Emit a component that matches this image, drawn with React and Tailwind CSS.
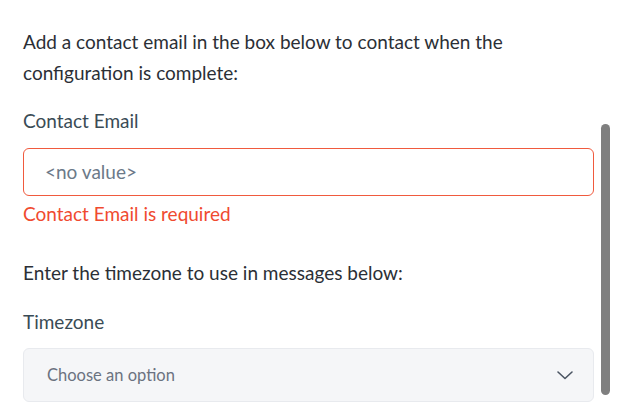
export default function App() {
    return (
        <div className="w-[619px] h-[407px] overflow-hidden bg-white flex" style={{ fontFamily: 'Lato, "Noto Sans", sans-serif' }}>
            {/* Form column */}
            <div className="flex-1 pl-[23px] pr-[4px] pt-[26px]">
                <p className="max-w-[500px] text-[19px] leading-[31px] text-[#2b2f36]">
                    Add a contact email in the box below to contact when the configuration is complete:
                </p>

                <label className="block mt-[21px] text-[19px] leading-[24px] text-[#3a4b55]">Contact Email</label>
                <div className="mt-[15px] h-[48px] border border-[#f05a3e] rounded-[6px] flex items-center px-[21px]">
                    <span className="text-[19px] text-[#6c7a89]">&lt;no value&gt;</span>
                </div>
                <div className="mt-[6px] text-[19px] leading-[24px] text-[#f04a2f]">Contact Email is required</div>

                <p className="mt-[35px] text-[19px] leading-[24px] text-[#2b2f36]">
                    Enter the timezone to use in messages below:
                </p>

                <label className="block mt-[25px] text-[19px] leading-[24px] text-[#3a4b55]">Timezone</label>
                <div className="mt-[14px] h-[54px] bg-[#f5f6f8] border border-[#e8eaee] rounded-[6px] flex items-center justify-between pl-[23px] pr-[16px]">
                    <span className="text-[16.5px] text-[#6b7280]">Choose an option</span>
                    <svg width="24" height="24" viewBox="0 0 24 24" fill="none" stroke="#4b5563" strokeWidth="1.6" strokeLinecap="round" strokeLinejoin="round">
                        <polyline points="5 9 12 15.5 19 9" />
                    </svg>
                </div>
            </div>

            {/* Scrollbar */}
            <div className="w-[21px] pt-[124px] pl-[3px]">
                <div className="w-[9px] h-[271px] rounded-full bg-[#7f7f7f]" />
            </div>
        </div>
    )
}
